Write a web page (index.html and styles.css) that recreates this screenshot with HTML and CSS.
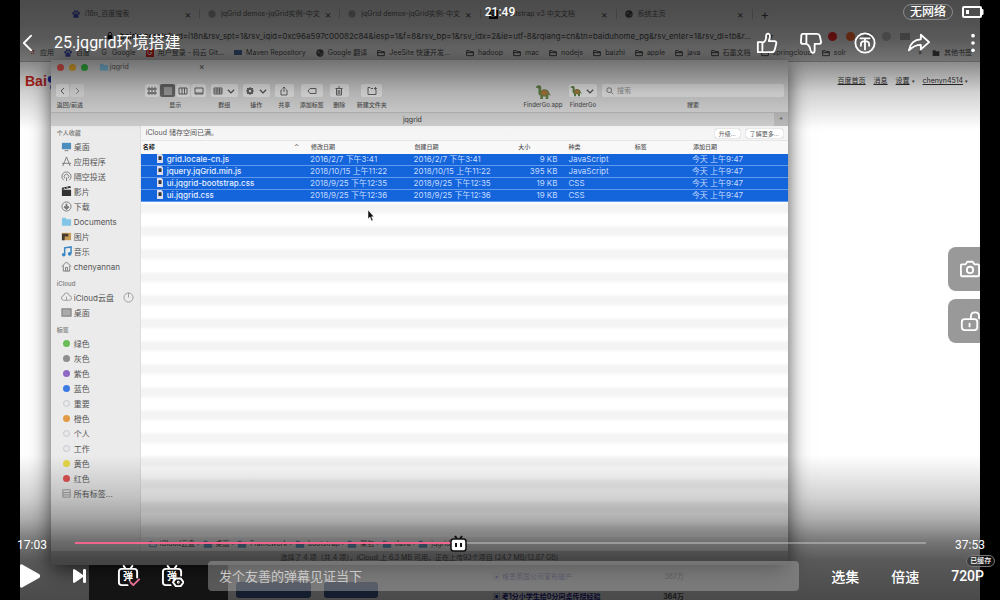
FILE: index.html
```html
<!DOCTYPE html>
<html lang="zh-CN">
<head>
<meta charset="utf-8">
<title>25.jqgrid环境搭建</title>
<link rel="stylesheet" href="styles.css">
</head>
<body>
<svg class="defs" aria-hidden="true">
  <symbol id="folder" viewBox="0 0 12 10"><path d="M1 1h4l1 1.500h5v7H1z" fill="currentColor"/></symbol>
  <symbol id="folder-line" viewBox="0 0 12 10"><path d="M1 1.500h4l1 1.500h5v6H1zM1 4.500h10" fill="none" stroke="currentColor" stroke-width="1.500"/></symbol>
  <symbol id="globe" viewBox="0 0 12 12"><circle cx="6" cy="6" r="5.500" fill="currentColor"/><path d="M2 4l3-1 1 2-2 2zM7 7l3-1-1 3-2 1z" fill="#888"/></symbol>
  <symbol id="chevron" viewBox="0 0 8 8"><path d="M1.500 3L4 5.500 6.500 3" fill="none" stroke="currentColor" stroke-width="1"/></symbol>
  <symbol id="paw" viewBox="0 0 12 12"><ellipse cx="2" cy="5" rx="1.500" ry="2"/><ellipse cx="4.500" cy="2.200" rx="1.500" ry="2"/><ellipse cx="8" cy="2.200" rx="1.500" ry="2"/><ellipse cx="10.300" cy="5" rx="1.500" ry="2"/><path d="M6 5c2 0 4 3 4 5s-2 2-4 1.500C4 12 2 12 2 10s2-5 4-5z"/></symbol>
  <symbol id="dino" viewBox="0 0 18 18"><path d="M1 4c0-3 6-4 6 0v4c1-3 8-3 9 2l2 3-3-1v5h-3v-3H9v3H6v-4C3 12 4 8 4 5z" fill="#668447"/><path d="M7 9c2-4 7-2 8 2l-4 2-4-1z" fill="#b17a3d"/></symbol>
  <symbol id="file" viewBox="0 0 10 12"><path d="M1 0h6l2 2v10H1z" fill="#dde"/><rect x="3" y="3" width="4" height="5" fill="#333"/></symbol>
</svg>
<main class="player">
  <div class="screencast">
    <section class="browser">
      <div class="tabs">
        <div class="tab"><svg class="i8 blue"><use href="#paw"/></svg><span>i18n_百度搜索</span><b>×</b></div>
        <div class="tab"><svg class="i8 faint"><use href="#globe"/></svg><span>jqGrid demos-jqGrid实例-中文</span><b>×</b></div>
        <div class="tab"><svg class="i8 faint"><use href="#globe"/></svg><span>jqGrid demos-jqGrid实例-中文</span><b>×</b></div>
        <div class="tab"><i class="boot">B</i><span>Bootstrap v3 中文文档</span><b>×</b></div>
        <div class="tab"><svg class="i8"><use href="#globe"/></svg><span>系统主页</span><b>×</b></div>
        <b class="plus">+</b>
      </div>
      <div class="address">
        <svg class="i8" viewBox="0 0 8 10"><path d="M1 4h6v5H1z"/><path d="M2 4V2c0-2 4-2 4 0v2" fill="none" stroke="#000"/></svg>
        <span class="url"><strong>baidu.com</strong>/s?wd=i18n&amp;rsv_spt=1&amp;rsv_iqid=0xc96a597c00082c84&amp;iesp=1&amp;f=8&amp;rsv_bp=1&amp;rsv_idx=2&amp;ie=utf-8&amp;rqlang=cn&amp;tn=baiduhome_pg&amp;rsv_enter=1&amp;rsv_dl=tb&amp;r...</span>
        <span class="star">★</span>
        <span class="exts"><i class="dot red"></i><i class="dot orange"></i><i class="dot"></i><i class="dot"></i><i class="sq"></i></span>
      </div>
      <nav class="bookmarks">
        <span><i class="apps">⠿</i>应用</span>
        <span><svg class="i8 blue"><use href="#paw"/></svg>百度</span>
        <span><i>G</i>Google</span>
        <span><i class="git">G</i>用户登录 - 码云 Git...</span>
        <span><i class="mvn"></i>Maven Repository</span>
        <span><svg class="i8"><use href="#globe"/></svg>Google 翻译</span>
        <span><svg class="i8"><use href="#folder-line"/></svg>JeeSite 快速开发...</span>
        <span class="dir"><svg class="i8"><use href="#folder-line"/></svg>hadoop</span>
        <span><svg class="i8"><use href="#folder-line"/></svg>mac</span>
        <span><svg class="i8"><use href="#folder-line"/></svg>nodejs</span>
        <span><svg class="i8"><use href="#folder-line"/></svg>baizhi</span>
        <span><svg class="i8"><use href="#folder-line"/></svg>apple</span>
        <span><svg class="i8"><use href="#folder-line"/></svg>java</span>
        <span><svg class="i8"><use href="#folder-line"/></svg>石墨文档</span>
        <span><svg class="i8"><use href="#folder-line"/></svg>springcloud</span>
        <span><svg class="i8"><use href="#folder-line"/></svg>solr</span>
        <span class="rest">»</span>
        <span><svg class="i8"><use href="#folder"/></svg>其他书签</span>
      </nav>
      <div class="webpage">
        <div class="webtop">
          <span class="logo">Bai<svg class="logopaw"><use href="#paw"/></svg></span>
          <nav class="weblinks"><a href="#">百度首页</a><a href="#">消息</a><span><a href="#">设置</a> <small>▾</small></span><span><a href="#">chenyn4514</a> <small>▾</small></span></nav>
        </div>
        <div class="webbottom">
          <div class="dark"></div>
          <div class="chips"><i></i><i></i></div>
          <ul class="hot">
            <li><span>▣ 维恩英国公司宣布破产</span><em>387万</em></li>
            <li class="strong"><span>▣ 考1分小学生给0分同桌传授经验</span><em>364万</em></li>
          </ul>
        </div>
      </div>
    </section>

    <section class="finder">
      <div class="titlebar">
        <i class="light close"></i><i class="light mini"></i><i class="light full"></i>
        <svg class="i10 sky"><use href="#folder"/></svg><span class="doc">jqgrid</span><b>×</b>
      </div>
      <div class="toolbar">
        <div class="tool nav"><div class="btns"><button aria-label="后退"><svg viewBox="0 0 10 10"><path d="M6 2L3 5l3 3"/></svg></button><button aria-label="前进" class="off"><svg viewBox="0 0 10 10"><path d="M4 2l3 3-3 3"/></svg></button></div><label>返回/前进</label></div>
        <div class="tool views"><div class="btns"><button aria-label="图标"><svg viewBox="0 0 10 10"><path d="M1 2h2v2H1zM4 2h2v2H4zM7 2h2v2H7zM1 6h2v2H1zM4 6h2v2H4zM7 6h2v2H7z"/></svg></button><button aria-label="列表" class="on"><svg viewBox="0 0 10 10"><path d="M1 2h8M1 4h8M1 6h8M1 8h8"/></svg></button><button aria-label="分栏"><svg viewBox="0 0 10 10"><path d="M1 2h8v6H1zM4 2v6M6.500 2v6"/></svg></button><button aria-label="画廊"><svg viewBox="0 0 10 10"><path d="M1 2h8v6H1zM1 7h8"/></svg></button></div><label>显示</label></div>
        <div class="tool group"><div class="btns"><button aria-label="群组"><svg viewBox="0 0 10 10"><path d="M1 2h8v6H1zM1 4h8M1 6h8M4 2v6M6.500 2v6"/></svg><svg><use href="#chevron"/></svg></button></div><label>群组</label></div>
        <div class="tool group"><div class="btns"><button aria-label="操作"><svg viewBox="0 0 10 10"><circle cx="5" cy="5" r="2.200" stroke-width="2"/><path d="M5 1v8M1 5h8M2 2l6 6M8 2L2 8" stroke-dasharray="2 5"/></svg><svg><use href="#chevron"/></svg></button></div><label>操作</label></div>
        <div class="tool share"><div class="btns"><button aria-label="共享"><svg viewBox="0 0 10 10"><path d="M3 4H2v5h6V4H7M5 6V1M3.500 2.500L5 1l1.500 1.500"/></svg></button></div><label>共享</label></div>
        <div class="tool tag"><div class="btns"><button aria-label="添加标签"><svg viewBox="0 0 10 10"><path d="M3 2.500h6v5H3L1 5z"/></svg></button></div><label>添加标签</label></div>
        <div class="tool share"><div class="btns"><button aria-label="删除"><svg viewBox="0 0 10 10"><path d="M1.500 2.500h7M4 1h2M2.500 3v6h5V3M4.200 4v4M5.800 4v4"/></svg></button></div><label>删除</label></div>
        <div class="tool newf"><div class="btns"><button aria-label="新建文件夹"><svg viewBox="0 0 10 10"><path d="M6 2.500H4L3 1.500H1v7h8V4M7 2.500h3M8.500 1v3"/></svg></button></div><label>新建文件夹</label></div>
        <div class="tool app"><svg class="i16"><use href="#dino"/></svg><label>FinderGo.app</label></div>
        <div class="tool go"><div class="btns"><button aria-label="FinderGo"><svg class="i12"><use href="#dino"/></svg><svg><use href="#chevron"/></svg></button></div><label>FinderGo</label></div>
        <div class="tool search"><div class="box"><svg viewBox="0 0 10 10"><circle cx="4" cy="4" r="3"/><path d="M6.500 6.500L9 9"/></svg><input id="q" type="text" placeholder="搜索"></div><label for="q">搜索</label></div>
      </div>
      <div class="tabtitle"><span>jqgrid</span><b>+</b></div>
      <div class="panes">
        <aside class="sidebar">
          <h3>个人收藏</h3>
          <ul>
            <li><svg viewBox="0 0 12 12"><rect x="1" y="2" width="10" height="7" fill="#4b8ebd"/><path d="M4 10.500h4" stroke="#777"/></svg>桌面</li>
            <li><svg viewBox="0 0 12 12" class="ln"><path d="M6 1L2 11M6 1l4 10M1 8h10"/></svg>应用程序</li>
            <li><svg viewBox="0 0 12 12" class="ln"><path d="M3 10a5 5 0 1 1 6 0M4.500 8a2.500 2.500 0 1 1 3 0M6 7v4"/></svg>隔空投送</li>
            <li><svg viewBox="0 0 12 12"><path d="M1 4h10v7H1zM1 2l9-2 1 2-10 2z" fill="#333"/><path d="M3 2l2 2M6 1l2 2" stroke="#ddd"/></svg>影片</li>
            <li><svg viewBox="0 0 12 12" class="ln"><circle cx="6" cy="6" r="5"/><path d="M6 3v5M3.500 6L6 8.500 8.500 6" stroke-width="2"/></svg>下载</li>
            <li><svg class="sky"><use href="#folder"/></svg>Documents</li>
            <li><svg viewBox="0 0 12 12"><rect x="1" y="2" width="10" height="8" fill="#c79a58"/><path d="M1 3h7v3H4v4H1z" fill="#443a30"/></svg>图片</li>
            <li><svg viewBox="0 0 12 12"><path d="M4 9V2l7-1v7" fill="none" stroke="#3b86c4" stroke-width="1.600"/><circle cx="3" cy="9.500" r="2" fill="#3b86c4"/><circle cx="9.500" cy="8.500" r="2" fill="#3b86c4"/></svg>音乐</li>
            <li><svg viewBox="0 0 12 12" class="ln"><path d="M1 6l5-5 5 5M2.500 5v6h7V5M5 11V7h2v4"/></svg>chenyannan</li>
          </ul>
          <h3>iCloud</h3>
          <ul>
            <li><svg viewBox="0 0 12 12" class="ln thin"><path d="M3 9a2.500 2.500 0 0 1 0-5 3 3 0 0 1 6 0 2.500 2.500 0 0 1 0 5zM6 5v4"/></svg>iCloud云盘<svg class="clock ln thin" viewBox="0 0 12 12"><circle cx="6" cy="6" r="5"/><path d="M6 1v5"/></svg></li>
            <li><svg viewBox="0 0 12 12"><rect x="1" y="2" width="10" height="8" fill="#aaa" stroke="#777"/></svg>桌面</li>
          </ul>
          <h3>标签</h3>
          <ul>
            <li><i class="tagdot green"></i>绿色</li>
            <li><i class="tagdot gray"></i>灰色</li>
            <li><i class="tagdot purple"></i>紫色</li>
            <li><i class="tagdot azure"></i>蓝色</li>
            <li><i class="tagdot none"></i>重要</li>
            <li><i class="tagdot amber"></i>橙色</li>
            <li><i class="tagdot none"></i>个人</li>
            <li><i class="tagdot none"></i>工作</li>
            <li><i class="tagdot yellow"></i>黄色</li>
            <li><i class="tagdot crimson"></i>红色</li>
            <li><svg viewBox="0 0 12 12" class="ln thin"><path d="M2 2h8v8H2zM2 5h8M2 7.500h8"/></svg>所有标签...</li>
          </ul>
        </aside>
        <div class="content">
          <div class="notice"><span>iCloud 储存空间已满。</span><button>升级...</button><button>了解更多...</button></div>
          <table class="files">
            <colgroup><col class="c-name"><col class="c-date"><col class="c-date"><col class="c-size"><col class="c-kind"><col class="c-tag"><col></colgroup>
            <thead><tr><th><strong>名称</strong><span class="sort">⌃</span></th><th>修改日期</th><th>创建日期</th><th>大小</th><th class="kind">种类</th><th>标签</th><th>添加日期</th></tr></thead>
            <tbody>
              <tr><td class="fn"><svg><use href="#file"/></svg>grid.locale-cn.js</td><td>2016/2/7 下午3:41</td><td>2016/2/7 下午3:41</td><td class="size">9 KB</td><td class="kind">JavaScript</td><td></td><td>今天 上午9:47</td></tr>
              <tr><td class="fn"><svg><use href="#file"/></svg>jquery.jqGrid.min.js</td><td>2018/10/15 上午11:22</td><td>2018/10/15 上午11:22</td><td class="size">395 KB</td><td class="kind">JavaScript</td><td></td><td>今天 上午9:47</td></tr>
              <tr><td class="fn"><svg><use href="#file"/></svg>ui.jqgrid-bootstrap.css</td><td>2018/9/25 下午12:35</td><td>2018/9/25 下午12:35</td><td class="size">19 KB</td><td class="kind">CSS</td><td></td><td>今天 上午9:47</td></tr>
              <tr><td class="fn"><svg><use href="#file"/></svg>ui.jqgrid.css</td><td>2018/9/25 下午12:36</td><td>2018/9/25 下午12:36</td><td class="size">19 KB</td><td class="kind">CSS</td><td></td><td>今天 上午9:47</td></tr>
            </tbody>
          </table>
          <div class="stripes"></div>
          <div class="path">
            <span><svg class="i8"><use href="#folder-line"/></svg>iCloud云盘 ›</span><span><svg class="i10"><use href="#folder"/></svg>桌面 ›</span><span><svg class="i10"><use href="#folder"/></svg>Framework ›</span><span><svg class="i10"><use href="#folder"/></svg>bootstrap ›</span><span><svg class="i10"><use href="#folder"/></svg>架包 ›</span><span><svg class="i10"><use href="#folder"/></svg>Java ›</span><span><svg class="i10"><use href="#folder"/></svg>jqgrid</span>
          </div>
        </div>
      </div>
      <div class="statusline">选择了 4 项（共 4 项），iCloud 上 6.3 MB 可用，正在上传93个项目 (24.7 MB/13.87 GB)</div>
    </section>
    <svg class="pointer" viewBox="0 0 8 12"><path d="M1 0v9l2-2 1.500 4 1.500-.6L4.600 6.700H7z" fill="#111" stroke="#fff" stroke-width=".5"/></svg>
  </div>

  <div class="shade"></div>

  <div class="controls">
    <header class="top">
      <div class="status"><time>21:49</time><div class="sys"><span class="net">无网络</span><svg class="battery" viewBox="0 0 22 12"><rect x="1" y="1" width="18" height="10" rx="1"/><path d="M20.500 4v4"/><rect x="4" y="4" width="3" height="4" fill="#fff" stroke="none"/></svg></div></div>
      <div class="heading">
        <button class="back" aria-label="返回"><svg viewBox="0 0 12 20"><path d="M10 2L2 10l8 8"/></svg></button>
        <h1>25.jqgrid环境搭建</h1>
        <div class="actions">
          <button aria-label="点赞"><svg viewBox="0 0 24 24"><path d="M2 11h5v11H2zM7 12c3-1 4-4 4-7 0-5 5-4 4 1l-1 4h6c2 0 2.500 1.500 2 3l-1.500 6c-.5 2-1.500 3-3 3H7"/></svg></button>
          <button aria-label="不喜欢"><svg viewBox="0 0 24 24"><path d="M3 2h4v11H3.500Q1 13 1 10.500L1.500 4Q1.500 2 3 2zM7 2h11.500Q21 2 21.500 4L23 10.500Q23 13 20.500 13H16v7c0 4-4 3-4.500 0-.5-3-1.500-6-4.500-7"/></svg></button>
          <button aria-label="投币"><svg viewBox="0 0 24 24"><circle cx="12" cy="12" r="10.500"/><path d="M7 7h10M12 7v12M7.500 15v-1.500c0-2.500 2-3.500 4.500-3.500s4.500 1 4.500 3.500V15"/></svg></button>
          <button aria-label="分享"><svg viewBox="0 0 24 24"><path d="M14 3l9 8-9 8v-5C8 14 5 16 1 20 2 13 7 8 14 8z"/></svg></button>
          <button aria-label="更多"><svg viewBox="0 0 24 24" class="solid"><circle cx="12" cy="4" r="2"/><circle cx="12" cy="12" r="2"/><circle cx="12" cy="20" r="2"/></svg></button>
        </div>
      </div>
    </header>
    <div class="side">
      <button aria-label="截图"><svg viewBox="0 0 22 18"><path d="M2 4h4l2-3h6l2 3h4c1 0 1 0 1 1v11c0 1 0 1-1 1H2c-1 0-1 0-1-1V5c0-1 0-1 1-1z"/><circle cx="11" cy="10" r="3.500"/></svg></button>
      <button aria-label="锁定"><svg viewBox="0 0 22 22"><rect x="2" y="9" width="17" height="12" rx="3"/><path d="M12 9V6c0-6 9-6 9 0v2"/><path d="M10.500 14v3"/></svg></button>
    </div>
    <footer class="bottom">
      <div class="seek"><time>17:03</time><input type="range" aria-label="进度" min="0" max="2273" value="1023" style="--played:45%"><time>37:53</time></div>
      <div class="bar">
        <button class="play" aria-label="播放"><svg viewBox="0 0 20 24"><path d="M0 2C0 0 2 0 3 1l16 9c1.500 1 1.500 3 0 4L3 23c-1 1-3 1-3-1z"/></svg></button>
        <button class="next" aria-label="下一集"><svg viewBox="0 0 14 14"><path d="M0 1c0-1 1-1 2-.5L10 6V1q0-1 1.500-1T13 1v12q0 1-1.500 1T10 13V8l-8 5.500C1 14 0 14 0 13z"/></svg></button>
        <button class="dm" aria-label="弹幕开关"><svg viewBox="0 0 24 24"><path d="M21 13V7q0-3-3-3H5Q2 4 2 7v11q0 3 3 3h6M7 1l2 3M16 1l-2 3"/><path d="M14 18l3 3 6-6" stroke="#e56f93"/></svg><span>弹</span></button>
        <button class="dm" aria-label="弹幕设置"><svg viewBox="0 0 24 24"><path d="M21 11V7q0-3-3-3H5Q2 4 2 7v11q0 3 3 3h5M7 1l2 3M16 1l-2 3"/><path d="M15.500 14h5l3 4-3 4h-5l-3-4z"/><circle cx="18" cy="18" r=".5"/></svg><span>弹</span></button>
        <input class="say" type="text" aria-label="发弹幕" placeholder="发个友善的弹幕见证当下">
        <button class="txt">选集</button>
        <button class="txt">倍速</button>
        <button class="txt quality">720P<span class="cached">已缓存</span></button>
      </div>
    </footer>
  </div>
</main>
</body>
</html>
```
FILE: styles.css
```css
* { box-sizing: border-box; }
body { margin: 0; background: #000; font-family: Roboto, "Noto Sans CJK SC", sans-serif; }
button { border: 0; padding: 0; background: none; color: inherit; font: inherit; }
input { font: inherit; }
ul { list-style: none; margin: 0; padding: 0; }
i, em { font-style: normal; }
svg { flex: none; }
.defs { position: absolute; width: 0; height: 0; }

.player { position: relative; height: 100vh; min-height: 560px; overflow: hidden; color: #fff; }
.screencast { position: absolute; inset: 0 20px; overflow: hidden; font: 7px/10px Inter, "Noto Sans CJK SC", sans-serif; color: #555; white-space: nowrap; }
.i8 { width: 8px; height: 8px; }
.i10 { width: 10px; height: 10px; }
.i12 { width: 12px; height: 12px; }
.i16 { width: 16px; height: 16px; }
.blue { fill: #3a4aa8; }
.faint { color: #999; }
.sky { color: #83c5e6; }

/* browser behind */
.browser { height: 100%; display: flex; flex-direction: column; background: #fff; color: #444; }
.tabs { display: flex; align-items: center; height: 28px; padding-left: 44px; background: #cfcfcf; }
.tab { flex: 0 0 136px; display: flex; align-items: center; gap: 5px; padding: 0 8px; border-right: 1px solid #aaa; }
.tab span { flex: 1; overflow: hidden; color: #555; }
.tab b { font-weight: 400; font-size: 10px; }
.boot { width: 9px; height: 9px; background: #111; color: #ccc; text-align: center; font-size: 7px; }
.plus { padding-left: 8px; font-size: 13px; font-weight: 400; }
.address { display: flex; align-items: center; gap: 6px; height: 16px; padding-left: 86px; background: #d4d4d4; font-size: 8px; }
.url { flex: 0 1 640px; overflow: hidden; }
.url strong { font-weight: 500; color: #111; }
.star { color: #555; }
.exts { display: flex; align-items: center; gap: 9px; margin-left: 48px; }
.dot { width: 9px; height: 9px; border-radius: 50%; background: #aaa; }
.dot.red { background: #d22; }
.dot.orange { background: #e5602a; }
.sq { width: 10px; height: 7px; background: #999; }
.bookmarks { display: flex; align-items: center; gap: 10px; height: 18px; padding: 0 8px; background: #d6d6d6; border-bottom: 1px solid #b8b8b8; }
.bookmarks span { display: flex; align-items: center; gap: 4px; }
.bookmarks .dir { margin-left: 6px; }
.bookmarks .rest { margin-left: auto; }
.bookmarks i { width: 8px; text-align: center; }
.bookmarks .apps { color: #c33; }
.bookmarks .git { background: #c22; color: #fff; line-height: 8px; }
.bookmarks .mvn { height: 5px; background: #46618f; }
.webpage { flex: 1; display: flex; flex-direction: column; justify-content: space-between; }
.webtop { display: flex; justify-content: space-between; align-items: center; height: 38px; padding: 0 12px 0 5px; }
.logo { display: flex; align-items: center; font: bold 14px/16px "Liberation Sans", sans-serif; color: #d2281e; }
.logopaw { width: 20px; height: 20px; fill: #2534c8; }
.weblinks { display: flex; gap: 8px; }
.weblinks a { color: #333; }
.weblinks small { font-size: 5px; }
.webbottom { display: flex; height: 36px; padding-left: 69px; }
.dark { width: 139px; background: #444; }
.chips { display: flex; align-items: flex-end; gap: 13px; width: 265px; padding: 0 0 2px 8px; }
.chips i { width: 75px; height: 16px; border-radius: 3px; background: #46639c; }
.chips i + i { width: 54px; }
.hot li { display: flex; justify-content: space-between; width: 191px; height: 20px; align-items: center; color: #3d48b4; padding-top: 5px; font-size: 7px; }
.hot em { color: #555; }
.hot .strong { font-weight: 700; color: #1c2490; }

/* Finder window */
.finder { position: absolute; left: 3%; right: 20%; top: 60px; bottom: 35px; margin-left: 2px; display: flex; flex-direction: column; background: #d8d8d8; box-shadow: 0 5px 20px rgba(0,0,0,.7); }
.titlebar { display: flex; align-items: center; gap: 5px; height: 18px; padding: 0 6px 4px; }
.light { width: 7px; height: 7px; border-radius: 50%; }
.close { background: #f0584d; } .mini { background: #efb32f; } .full { background: #36bd45; }
.titlebar svg { margin-left: 6px; }
.doc { margin-left: -4px; }
.titlebar b { margin-left: 65px; font-weight: 400; font-size: 9px; }
.toolbar { display: flex; gap: 5px; height: 34px; padding: 6px 4px 0 5px; }
.tool { display: flex; flex-direction: column; align-items: center; justify-content: space-between; height: 25px; font-size: 6px; line-height: 8px; color: #555; }
.tool label { font-weight: 500; }
.btns { display: flex; gap: 1px; width: 100%; justify-content: center; }
.btns button { flex: 1; display: flex; align-items: center; justify-content: space-around; height: 13px; background: #f0f0f0; border-radius: 2px; }
.tool svg { fill: none; stroke: #666; stroke-width: 1; }
.btns svg { width: 10px; height: 10px; }
.tool .on { background: #6b6b6b; }
.tool .on svg { stroke: #ddd; }
.off { opacity: .6; }
.nav { width: 28px; margin-right: 56px; }
.views { width: 61px; }
.group { width: 27px; }
.share { width: 19px; }
.tag { width: 26px; }
.tag .btns { width: 22px; }
.newf { width: 36px; }
.newf .btns { width: 21px; }
.app { width: 42px; margin-left: auto; }
.app svg { stroke: none; }
.go { width: 28px; }
.go .i12 { width: 12px; height: 12px; stroke: none; }
.search { width: 25%; }
.box { display: flex; align-items: center; gap: 3px; width: 100%; height: 13px; padding: 0 4px; background: #eee; border-radius: 2px; }
.box svg { width: 8px; height: 8px; }
.box input { flex: 1; min-width: 0; border: 0; padding: 0; background: none; font-size: 7px; }
.box input::placeholder { color: #999; }
.tabtitle { display: flex; align-items: center; height: 14px; border-top: 1px solid #bbb; background: #cecece; }
.tabtitle span { flex: 1; text-align: center; color: #333; }
.tabtitle b { width: 14px; align-self: stretch; text-align: center; background: #bbb; font-weight: 400; }
.panes { flex: 1; display: flex; min-height: 0; }
.sidebar { flex: 0 0 90px; padding: 0 0 0 6px; background: #ebebeb; border-right: 1px solid #ddd; font-size: 8px; overflow: hidden; }
.sidebar h3 { margin: 3px 0 0; height: 13px; font-size: 6px; line-height: 13px; font-weight: 600; color: #888; }
.sidebar h3:first-child { margin: 0; }
.sidebar li { display: flex; align-items: center; gap: 2px; height: 15px; padding-left: 4px; }
.sidebar li svg { width: 11px; height: 11px; }
.sidebar .clock { margin-left: auto; margin-right: 6px; }
.ln { fill: none; stroke: #777; stroke-width: 1; }
.thin { stroke: #999; }
.tagdot { width: 7px; height: 7px; margin: 0 2px; border-radius: 50%; }
.green { background: #69bd58; } .gray { background: #8e8e8e; } .purple { background: #9068c4; } .azure { background: #3d7be4; }
.amber { background: #e29b43; } .yellow { background: #e5d746; } .crimson { background: #e25353; }
.none { border: 1px solid #c4c8d0; background: #e8e8e8; }
.content { flex: 1; min-width: 0; display: flex; flex-direction: column; background: #fff; }
.notice { display: flex; align-items: center; gap: 6px; height: 14px; padding: 0 5px; background: #f5f5f5; }
.notice span { flex: 1; }
.notice button { height: 9px; padding: 0 4px; border-radius: 2px; background: #fff; box-shadow: 0 0 1px #777; font-size: 6px; line-height: 9px; }
.files { width: 100%; table-layout: fixed; border-collapse: collapse; color: #fff; }
.c-name { width: 26%; } .c-date { width: 16%; } .c-size { width: 7%; } .c-kind { width: 11%; } .c-tag { width: 9%; }
.files th { height: 13px; padding: 0 0 0 2px; text-align: left; font-size: 6px; font-weight: 500; color: #555; background: #f8f8f8; border-top: 1px solid #e6e6e6; }
.files th strong { color: #222; }
.sort { float: right; margin-right: 10px; }
.files td { height: 12px; padding: 0 0 0 1px; font-size: 8px; line-height: 11px; color: #c4dcff; background: #1464dc; border-bottom: 1px solid #5f9aee; }
.files .fn { padding-left: 15px; font-weight: 500; color: #e6f0ff; }
.fn svg { width: 8px; height: 9px; margin-right: 3px; vertical-align: -1px; }
.files .size { text-align: right; padding-right: 4px; }
.files .kind { padding-left: 7px; }
.stripes { flex: 1; background: repeating-linear-gradient(#fff 0, #f4f4f4 3px 9px, #fff 13px 23px); }
.path { display: flex; gap: 3px; height: 14px; align-items: center; padding-left: 8px; background: #f2f2f2; }
.path span { display: flex; align-items: center; gap: 3px; }
.path svg { color: #6a9fc4; }
.statusline { height: 14px; line-height: 14px; text-align: center; background: #c6c6c6; }
.pointer { position: absolute; left: 347px; top: 210px; width: 8px; height: 12px; }

.shade { position: absolute; inset: 0 20px; background:
  linear-gradient(rgba(0,0,0,.64), rgba(0,0,0,.58) 38px, rgba(0,0,0,.46) 62px, rgba(0,0,0,.18) 92px, transparent 130px),
  linear-gradient(to top, rgba(0,0,0,.71), rgba(0,0,0,.65) 40px, rgba(0,0,0,.54) 58px, rgba(0,0,0,.31) 82px, rgba(0,0,0,.18) 102px, transparent 145px); }

/* player controls */
.controls { position: relative; height: 100%; display: flex; flex-direction: column; }
.controls svg { fill: none; stroke: #fff; stroke-width: 2; stroke-linecap: round; stroke-linejoin: round; display: block; }
.top { height: 60px; }
.status { display: grid; grid-template-columns: 1fr auto 1fr; align-items: center; height: 24px; padding-right: 16px; font-size: 12px; }
.status time { grid-column: 2; padding-left: 16px; font-weight: 500; }
.sys { display: flex; justify-content: flex-end; align-items: center; gap: 9px; }
.net { padding: 0 6px; line-height: 14px; border: 1px solid #8a8a8a; border-radius: 8px; font-weight: 500; }
.battery { width: 22px; height: 12px; }
.heading { display: flex; align-items: center; height: 36px; padding: 2px 16px 0 22px; }
.back svg { width: 11px; height: 20px; }
h1 { flex: 1; margin: 0 0 0 21px; font-size: 16px; line-height: 20px; font-weight: 400; }
.actions { display: flex; gap: 32px; }
.actions svg { width: 22px; height: 22px; }
.actions button:first-child { margin-right: -10px; }
.actions .solid { fill: #fff; stroke: none; }
.side { flex: 1; display: flex; flex-direction: column; align-items: flex-end; justify-content: center; gap: 8px; padding-right: 20px; }
.side button { width: 32px; height: 44px; padding-left: 12px; border-radius: 8px 0 0 8px; background: #999; }
.side svg { width: 20px; height: 20px; }
.bottom { height: 70px; }
.seek { display: flex; align-items: center; justify-content: space-between; height: 30px; padding: 0 15px 0 17px; font-size: 12px; }
.seek time { flex: 0 0 29px; }
.seek input { flex: 1; height: 18px; margin: 0 29px 4px 28px; appearance: none; background: linear-gradient(90deg, #f0668f var(--played), rgba(255,255,255,.3) var(--played)) center / 100% 2px no-repeat; }
.seek input::-webkit-slider-thumb { appearance: none; width: 17px; height: 17px; background: url("data:image/svg+xml,%3Csvg xmlns='http://www.w3.org/2000/svg' viewBox='0 0 17 17'%3E%3Cpath d='M5 1l2 3M12 1l-2 3' stroke='%23111' stroke-width='2'/%3E%3Crect x='1' y='4' width='15' height='12' rx='2.500' fill='white' stroke='%23111' stroke-width='1.500'/%3E%3Cpath d='M6 8v4M11 8v4' stroke='%23111' stroke-width='2'/%3E%3C/svg%3E"); }
.bar { display: flex; align-items: center; height: 32px; padding: 0 16px 0 20px; }
.play svg { width: 20px; height: 24px; fill: #fff; stroke: none; }
.next { margin-left: 33px; }
.next svg { width: 14px; height: 14px; fill: #fff; stroke: none; }
.dm { position: relative; margin-left: 30px; }
.dm + .dm { margin-left: 21px; }
.dm svg { width: 23px; height: 23px; }
.dm span { position: absolute; left: 6px; top: 6px; font-size: 10px; line-height: 12px; font-weight: 700; }
.say { flex: 1; min-width: 0; height: 30px; margin: 0 32px 0 24px; padding: 0 11px; border: 0; border-radius: 4px; background: rgba(190,190,190,.4); color: #fff; font-size: 13px; }
.say::placeholder { color: #c9c9c9; }
.txt { margin-right: 32px; font-size: 14px; font-weight: 500; }
.quality { position: relative; margin: 0; }
.cached { position: absolute; left: 15px; top: -13px; padding: 0 3px; border: 1px solid #777; border-radius: 6px; background: rgba(30,30,30,.5); font-size: 7px; line-height: 10px; white-space: nowrap; }
```
